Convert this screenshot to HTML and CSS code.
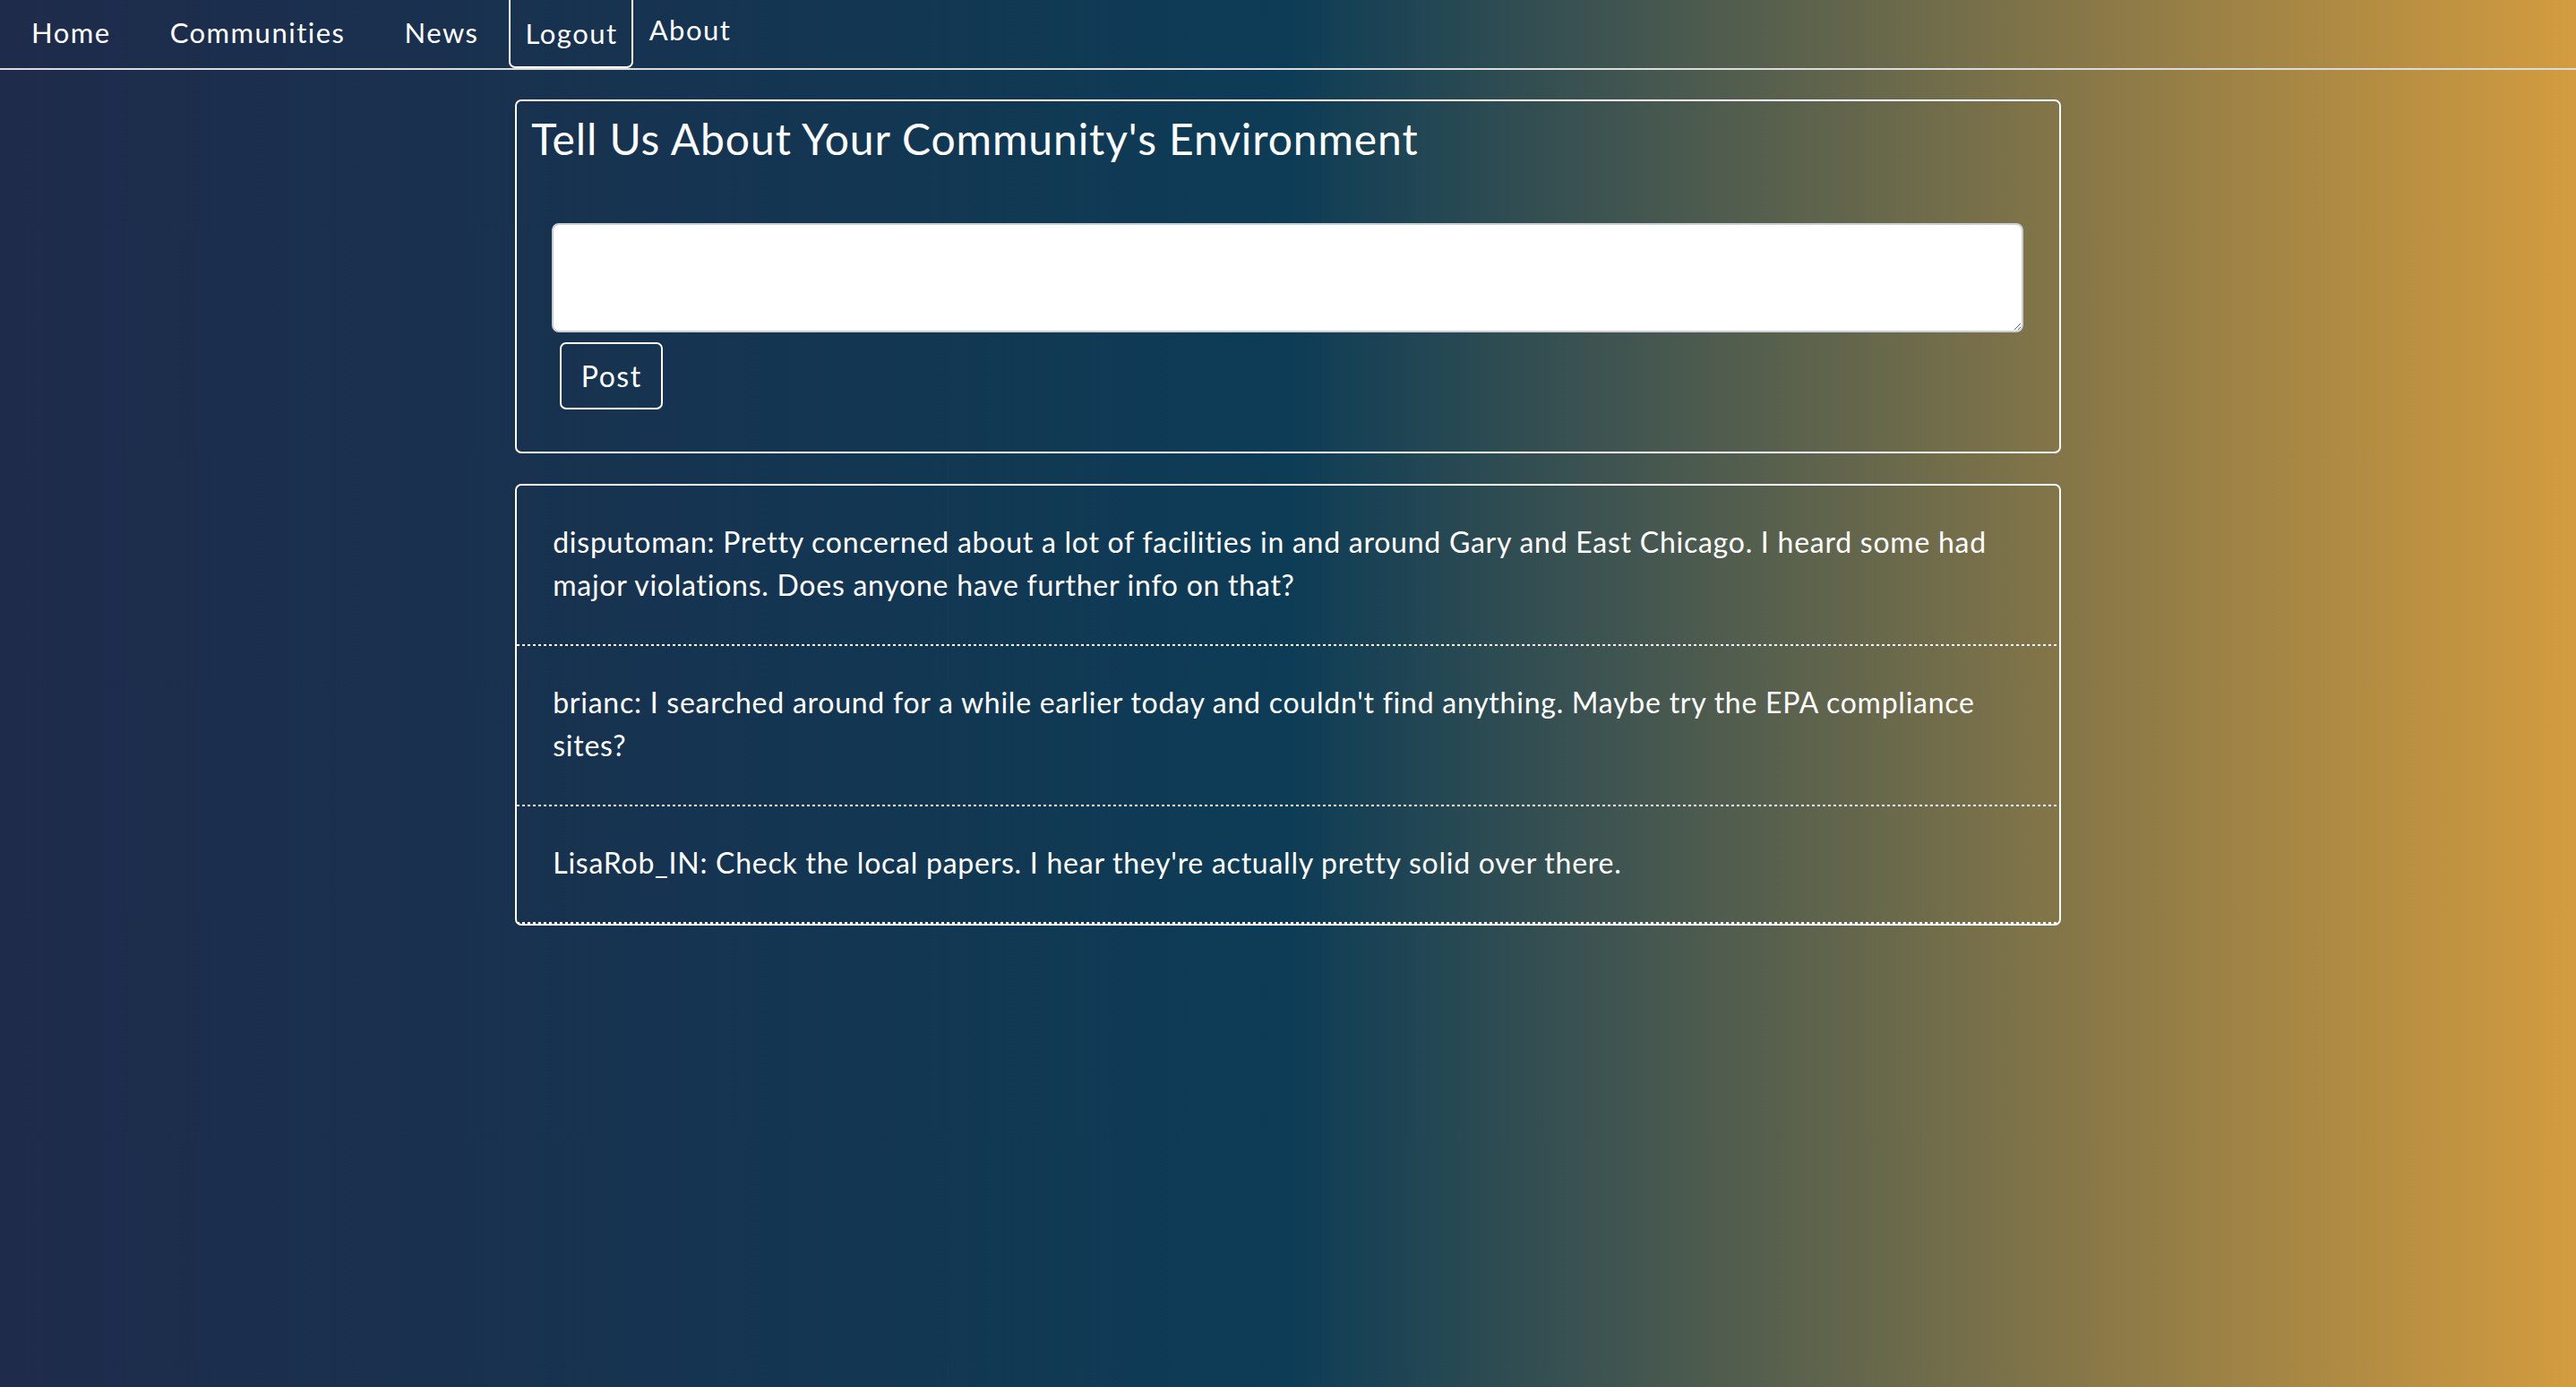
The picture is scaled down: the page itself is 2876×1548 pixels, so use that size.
FILE: index.html
```html
<!DOCTYPE html>
<html lang="en">
<head>
<meta charset="utf-8">
<title>Community Environment</title>
<link rel="stylesheet" href="styles.css">
</head>
<body>
<nav class="topnav">
  <a class="nav-link" href="#">Home</a>
  <a class="nav-link" href="#">Communities</a>
  <a class="nav-link" href="#">News</a>
  <a class="nav-link nav-logout" href="#">Logout</a>
  <a class="nav-link nav-about" href="#">About</a>
</nav>
<main class="main">
  <section class="card post-card">
    <h2 class="post-title">Tell Us About Your Community's Environment</h2>
    <form class="post-form">
      <textarea class="post-input"></textarea>
      <button type="button" class="post-btn">Post</button>
    </form>
  </section>
  <section class="card feed">
    <div class="feed-item">disputoman: Pretty concerned about a lot of facilities in and around Gary and East Chicago. I heard some had major violations. Does anyone have further info on that?</div>
    <div class="feed-item">brianc: I searched around for a while earlier today and couldn't find anything. Maybe try the EPA compliance sites?</div>
    <div class="feed-item">LisaRob_IN: Check the local papers. I hear they're actually pretty solid over there.</div>
  </section>
</main>
</body>
</html>
```

FILE: styles.css
```css
html {
  min-height: 100%;
  background: linear-gradient(to right, #1f2b4b 0%, #0d3c56 50%, #d39c3f 100%);
}
body {
  margin: 0;
  min-height: 1548px;
  font-family: Lato, "Open Sans", sans-serif;
  color: #ffffff;
}
.topnav {
  display: flex;
  align-items: stretch;
  height: 76px;
  border-bottom: 2px solid #dcdcdc;
  overflow: hidden;
}
.nav-link {
  color: #ffffff;
  text-decoration: none;
  font-size: 31px;
  letter-spacing: 1.5px;
  line-height: 72px;
  padding: 0 33px;
}
.nav-link:first-child {
  padding-left: 35px;
}
.nav-logout {
  margin-top: -8px;
  padding: 8px 15px 0 17px;
  line-height: 70px;
  border: 2px solid #ffffff;
  border-radius: 7px;
}
.nav-about {
  padding-left: 18px;
  line-height: 66px;
}
.main {
  padding-top: 33px;
}
.card {
  width: 60%;
  margin: 0 auto;
  border: 2px solid #ffffff;
  border-radius: 7px;
  box-sizing: border-box;
}
.post-card {
  padding: 0 0 47px;
}
.post-title {
  margin: 13px 0 0 16px;
  font-size: 48px;
  font-weight: 400;
  letter-spacing: 0.9px;
  line-height: 58px;
}
.post-form {
  display: flex;
  flex-direction: column;
  align-items: flex-start;
  padding: 0 40px 0 39px;
  margin-top: 65px;
}
.post-input {
  box-sizing: border-box;
  width: 100%;
  height: 122px;
  border: 2px solid #c9cdd4;
  border-radius: 8px;
  background: #ffffff;
  margin: 0;
  font-family: Lato, sans-serif;
}
.post-btn {
  margin: 11px 0 0 9px;
  width: 115px;
  height: 75px;
  background: transparent;
  color: #ffffff;
  border: 2px solid #ffffff;
  border-radius: 7px;
  font-family: Lato, sans-serif;
  font-size: 32px;
  letter-spacing: 1.5px;
  padding: 0;
}
.feed {
  margin-top: 34px;
}
.feed-item {
  padding: 39px 42px 44px 40px;
  font-size: 32px;
  letter-spacing: 0.75px;
  line-height: 48px;
  background: repeating-linear-gradient(to right, #ffffff 0 3px, transparent 3px 6px) left bottom / 100% 2px no-repeat;
}
```
